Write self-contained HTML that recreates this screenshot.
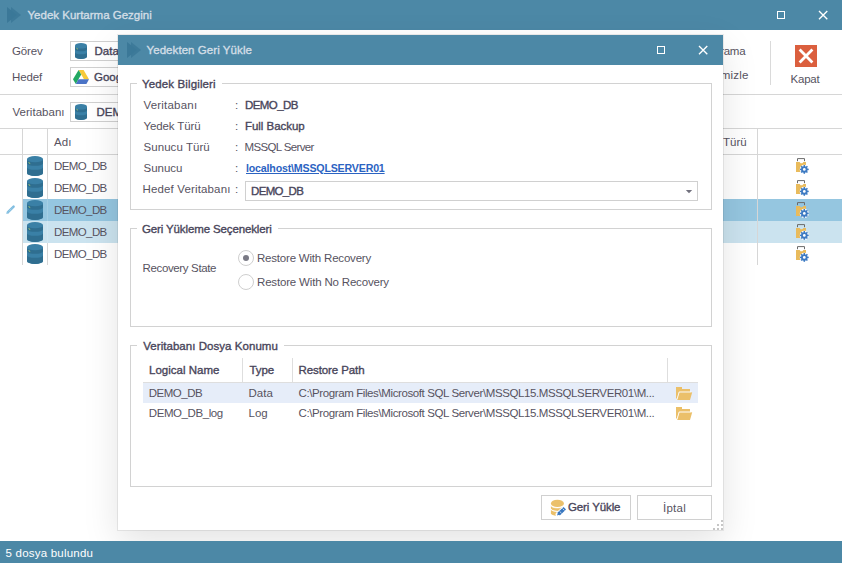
<!DOCTYPE html>
<html><head><meta charset="utf-8">
<style>
*{margin:0;padding:0;box-sizing:border-box}
html,body{width:842px;height:563px;overflow:hidden;background:#fff}
body{position:relative;font-family:"Liberation Sans",sans-serif;font-size:11.5px}
.a{position:absolute}
.t{position:absolute;white-space:nowrap;line-height:14px;height:14px}
.ln{position:absolute;background:#d6d6d6}
.tb{position:absolute;background:#4c88a6}
svg{position:absolute;overflow:visible}
</style></head><body>
<div class="tb" style="left:0;top:0;width:842px;height:30px"></div>
<svg style="left:0;top:0" width="30" height="30"><path d="M7 7L17 15L7 23Z" fill="#3b7898"/><path d="M11 7L21 15L11 23Z" fill="#3b7898" opacity="0.85"/></svg>
<div class="t" style="left:27.5px;top:8px;font-size:11.5px;letter-spacing:0.0px;color:#d3dee6;-webkit-text-stroke:0.35px #d3dee6">Yedek Kurtarma Gezgini</div>
<div class="a" style="left:777px;top:11px;width:8px;height:8px;border:1.2px solid #fff"></div>
<svg style="left:0;top:0" width="842" height="30"><path d="M819 11L827.3 19.3M827.3 11L819 19.3" stroke="#fff" stroke-width="1.35"/></svg>
<div class="t" style="left:12.0px;top:44px;font-size:11.5px;letter-spacing:-0.15px;color:#57535f">Görev</div>
<div class="a" style="left:70px;top:41px;width:240px;height:20px;border:1px solid #d0d0d0"></div>
<svg class="ic" style="left:75px;top:43px" width="12" height="16" viewBox="0 0 16 20" preserveAspectRatio="none"><path d="M0 3A8 3 0 0 1 16 3V17A8 3 0 0 1 0 17Z" fill="#3a80a6"/><path d="M0 4.6A8 2.2 0 0 0 16 4.6V8A8 2.2 0 0 1 0 8Z" fill="#2f6e90"/><path d="M0 12A8 2.2 0 0 0 16 12V17A8 3 0 0 1 0 17Z" fill="#2f6e90"/><path d="M2 6.6l1.8 1" stroke="#a9d06a" stroke-width="1.2"/></svg>
<div class="t" style="left:94.5px;top:44px;font-size:11.5px;letter-spacing:0px;color:#48455a;-webkit-text-stroke:0.35px #48455a">Database</div>
<div class="t" style="left:12.0px;top:70px;font-size:11.5px;letter-spacing:-0.15px;color:#57535f">Hedef</div>
<div class="a" style="left:70px;top:67px;width:240px;height:20px;border:1px solid #d0d0d0"></div>
<svg class="ic" style="left:73px;top:70px" width="16" height="14" viewBox="0 0 16 14"><path d="M5.6 0H10.6L16 9.3H11Z" fill="#f7c93a"/><path d="M5.6 0L8.2 4.5L2.8 14L0 9.2Z" fill="#22a861"/><path d="M2.8 14H13.4L16 9.3H5.5Z" fill="#4a73c6"/></svg>
<div class="t" style="left:94.0px;top:70px;font-size:11.5px;letter-spacing:0px;color:#48455a;-webkit-text-stroke:0.35px #48455a">Google Drive</div>
<div class="t" style="left:708.5px;top:44px;font-size:11.5px;letter-spacing:-0.25px;color:#57535f">Tarama</div>
<div class="t" style="left:708.0px;top:68px;font-size:11.5px;letter-spacing:0.25px;color:#57535f">Temizle</div>
<div class="ln" style="left:770px;top:41px;width:1px;height:44px;background:#dadada"></div>
<div class="a" style="left:795px;top:45px;width:22px;height:22px;background:#db5f3e"></div>
<svg style="left:0;top:0" width="842" height="100"><path d="M799.6 49.6L812.4 62.4M812.4 49.6L799.6 62.4" stroke="#fff" stroke-width="2.8"/></svg>
<div class="t" style="left:790.5px;top:72px;font-size:11.5px;letter-spacing:-0.2px;color:#57535f">Kapat</div>
<div class="ln" style="left:0;top:94px;width:842px;height:1px"></div>
<div class="t" style="left:12.5px;top:105px;font-size:11.5px;letter-spacing:0.023px;color:#57535f">Veritabanı</div>
<div class="a" style="left:70px;top:102px;width:240px;height:20px;border:1px solid #d0d0d0"></div>
<svg class="ic" style="left:75px;top:104px" width="12" height="16" viewBox="0 0 16 20" preserveAspectRatio="none"><path d="M0 3A8 3 0 0 1 16 3V17A8 3 0 0 1 0 17Z" fill="#3a80a6"/><path d="M0 4.6A8 2.2 0 0 0 16 4.6V8A8 2.2 0 0 1 0 8Z" fill="#2f6e90"/><path d="M0 12A8 2.2 0 0 0 16 12V17A8 3 0 0 1 0 17Z" fill="#2f6e90"/><path d="M2 6.6l1.8 1" stroke="#a9d06a" stroke-width="1.2"/></svg>
<div class="t" style="left:96.5px;top:105px;font-size:11.5px;letter-spacing:0px;color:#48455a;-webkit-text-stroke:0.35px #48455a">DEMO_DB</div>
<div class="ln" style="left:0;top:128px;width:842px;height:1px"></div>
<div class="ln" style="left:0;top:154px;width:842px;height:1px"></div>
<div class="a" style="left:23px;top:199px;width:819px;height:22px;background:#95c6e0"></div>
<div class="a" style="left:23px;top:221px;width:819px;height:22px;background:#cbe3ef"></div>
<div class="ln" style="left:22px;top:129px;width:1px;height:136px"></div>
<div class="ln" style="left:47px;top:129px;width:1px;height:136px"></div>
<div class="ln" style="left:757px;top:129px;width:1px;height:136px"></div>
<div class="a" style="left:47px;top:199px;width:1px;height:22px;background:#a4cee4"></div>
<div class="a" style="left:47px;top:221px;width:1px;height:22px;background:#d2e7f2"></div>
<div class="t" style="left:54.0px;top:135px;font-size:11.5px;letter-spacing:0.1px;color:#57535f">Adı</div>
<div class="t" style="left:688.5px;top:135px;font-size:11.5px;letter-spacing:0px;color:#57535f">Yedek Türü</div>
<svg class="ic" style="left:27px;top:156px" width="16" height="20" viewBox="0 0 16 20"><path d="M0 3A8 3 0 0 1 16 3V17A8 3 0 0 1 0 17Z" fill="#3a80a6"/><path d="M0 4A8 2.2 0 0 0 16 4V7.6A8 2.2 0 0 1 0 7.6Z" fill="#2f6e90"/><path d="M0 11.6A8 2.2 0 0 0 16 11.6V17A8 3 0 0 1 0 17Z" fill="#2f6e90"/><path d="M1.6 6.6l1.6 0.9" stroke="#a9d06a" stroke-width="1"/></svg>
<div class="t" style="left:54.0px;top:159px;font-size:11.5px;letter-spacing:-0.6px;color:#57535f">DEMO_DB</div>
<svg class="ic" style="left:796px;top:158px" width="16" height="18" viewBox="0 0 16 18"><path d="M1.5 3.2V0.6H8.5V3.2" fill="none" stroke="#6a6a6a" stroke-width="1"/><path d="M0 4H3.6L4.6 5.2H6.4L7.4 4H10V14H0Z" fill="#e9bb5c"/><g transform="translate(8.3,11.4)"><circle r="4.6" fill="#fff"/><g fill="#3d7ac2"><rect x="-0.75" y="-4.4" width="1.5" height="8.8"/><rect x="-0.75" y="-4.4" width="1.5" height="8.8" transform="rotate(90)"/><rect x="-0.75" y="-4.4" width="1.5" height="8.8" transform="rotate(45)"/><rect x="-0.75" y="-4.4" width="1.5" height="8.8" transform="rotate(-45)"/></g><circle r="2.3" fill="none" stroke="#3d7ac2" stroke-width="1.9"/><circle r="1.35" fill="#fff"/></g></svg>
<svg class="ic" style="left:27px;top:178px" width="16" height="20" viewBox="0 0 16 20"><path d="M0 3A8 3 0 0 1 16 3V17A8 3 0 0 1 0 17Z" fill="#3a80a6"/><path d="M0 4A8 2.2 0 0 0 16 4V7.6A8 2.2 0 0 1 0 7.6Z" fill="#2f6e90"/><path d="M0 11.6A8 2.2 0 0 0 16 11.6V17A8 3 0 0 1 0 17Z" fill="#2f6e90"/><path d="M1.6 6.6l1.6 0.9" stroke="#a9d06a" stroke-width="1"/></svg>
<div class="t" style="left:54.0px;top:181px;font-size:11.5px;letter-spacing:-0.6px;color:#57535f">DEMO_DB</div>
<svg class="ic" style="left:796px;top:180px" width="16" height="18" viewBox="0 0 16 18"><path d="M1.5 3.2V0.6H8.5V3.2" fill="none" stroke="#6a6a6a" stroke-width="1"/><path d="M0 4H3.6L4.6 5.2H6.4L7.4 4H10V14H0Z" fill="#e9bb5c"/><g transform="translate(8.3,11.4)"><circle r="4.6" fill="#fff"/><g fill="#3d7ac2"><rect x="-0.75" y="-4.4" width="1.5" height="8.8"/><rect x="-0.75" y="-4.4" width="1.5" height="8.8" transform="rotate(90)"/><rect x="-0.75" y="-4.4" width="1.5" height="8.8" transform="rotate(45)"/><rect x="-0.75" y="-4.4" width="1.5" height="8.8" transform="rotate(-45)"/></g><circle r="2.3" fill="none" stroke="#3d7ac2" stroke-width="1.9"/><circle r="1.35" fill="#fff"/></g></svg>
<svg class="ic" style="left:27px;top:200px" width="16" height="20" viewBox="0 0 16 20"><path d="M0 3A8 3 0 0 1 16 3V17A8 3 0 0 1 0 17Z" fill="#3a80a6"/><path d="M0 4A8 2.2 0 0 0 16 4V7.6A8 2.2 0 0 1 0 7.6Z" fill="#2f6e90"/><path d="M0 11.6A8 2.2 0 0 0 16 11.6V17A8 3 0 0 1 0 17Z" fill="#2f6e90"/><path d="M1.6 6.6l1.6 0.9" stroke="#a9d06a" stroke-width="1"/></svg>
<div class="t" style="left:54.0px;top:203px;font-size:11.5px;letter-spacing:-0.6px;color:#57535f">DEMO_DB</div>
<svg class="ic" style="left:796px;top:202px" width="16" height="18" viewBox="0 0 16 18"><path d="M1.5 3.2V0.6H8.5V3.2" fill="none" stroke="#6a6a6a" stroke-width="1"/><path d="M0 4H3.6L4.6 5.2H6.4L7.4 4H10V14H0Z" fill="#e9bb5c"/><g transform="translate(8.3,11.4)"><circle r="4.6" fill="#fff"/><g fill="#3d7ac2"><rect x="-0.75" y="-4.4" width="1.5" height="8.8"/><rect x="-0.75" y="-4.4" width="1.5" height="8.8" transform="rotate(90)"/><rect x="-0.75" y="-4.4" width="1.5" height="8.8" transform="rotate(45)"/><rect x="-0.75" y="-4.4" width="1.5" height="8.8" transform="rotate(-45)"/></g><circle r="2.3" fill="none" stroke="#3d7ac2" stroke-width="1.9"/><circle r="1.35" fill="#fff"/></g></svg>
<svg class="ic" style="left:27px;top:222px" width="16" height="20" viewBox="0 0 16 20"><path d="M0 3A8 3 0 0 1 16 3V17A8 3 0 0 1 0 17Z" fill="#3a80a6"/><path d="M0 4A8 2.2 0 0 0 16 4V7.6A8 2.2 0 0 1 0 7.6Z" fill="#2f6e90"/><path d="M0 11.6A8 2.2 0 0 0 16 11.6V17A8 3 0 0 1 0 17Z" fill="#2f6e90"/><path d="M1.6 6.6l1.6 0.9" stroke="#a9d06a" stroke-width="1"/></svg>
<div class="t" style="left:54.0px;top:225px;font-size:11.5px;letter-spacing:-0.6px;color:#57535f">DEMO_DB</div>
<svg class="ic" style="left:796px;top:224px" width="16" height="18" viewBox="0 0 16 18"><path d="M1.5 3.2V0.6H8.5V3.2" fill="none" stroke="#6a6a6a" stroke-width="1"/><path d="M0 4H3.6L4.6 5.2H6.4L7.4 4H10V14H0Z" fill="#e9bb5c"/><g transform="translate(8.3,11.4)"><circle r="4.6" fill="#fff"/><g fill="#3d7ac2"><rect x="-0.75" y="-4.4" width="1.5" height="8.8"/><rect x="-0.75" y="-4.4" width="1.5" height="8.8" transform="rotate(90)"/><rect x="-0.75" y="-4.4" width="1.5" height="8.8" transform="rotate(45)"/><rect x="-0.75" y="-4.4" width="1.5" height="8.8" transform="rotate(-45)"/></g><circle r="2.3" fill="none" stroke="#3d7ac2" stroke-width="1.9"/><circle r="1.35" fill="#fff"/></g></svg>
<svg class="ic" style="left:27px;top:244px" width="16" height="20" viewBox="0 0 16 20"><path d="M0 3A8 3 0 0 1 16 3V17A8 3 0 0 1 0 17Z" fill="#3a80a6"/><path d="M0 4A8 2.2 0 0 0 16 4V7.6A8 2.2 0 0 1 0 7.6Z" fill="#2f6e90"/><path d="M0 11.6A8 2.2 0 0 0 16 11.6V17A8 3 0 0 1 0 17Z" fill="#2f6e90"/><path d="M1.6 6.6l1.6 0.9" stroke="#a9d06a" stroke-width="1"/></svg>
<div class="t" style="left:54.0px;top:247px;font-size:11.5px;letter-spacing:-0.6px;color:#57535f">DEMO_DB</div>
<svg class="ic" style="left:796px;top:246px" width="16" height="18" viewBox="0 0 16 18"><path d="M1.5 3.2V0.6H8.5V3.2" fill="none" stroke="#6a6a6a" stroke-width="1"/><path d="M0 4H3.6L4.6 5.2H6.4L7.4 4H10V14H0Z" fill="#e9bb5c"/><g transform="translate(8.3,11.4)"><circle r="4.6" fill="#fff"/><g fill="#3d7ac2"><rect x="-0.75" y="-4.4" width="1.5" height="8.8"/><rect x="-0.75" y="-4.4" width="1.5" height="8.8" transform="rotate(90)"/><rect x="-0.75" y="-4.4" width="1.5" height="8.8" transform="rotate(45)"/><rect x="-0.75" y="-4.4" width="1.5" height="8.8" transform="rotate(-45)"/></g><circle r="2.3" fill="none" stroke="#3d7ac2" stroke-width="1.9"/><circle r="1.35" fill="#fff"/></g></svg>
<svg style="left:0;top:0" width="30" height="230"><path d="M8 212.2L13.6 206.7" stroke="#7fbde0" stroke-width="2.5" stroke-linecap="round"/><path d="M6.2 214L7 211.2L9 213.2Z" fill="#8cc4e3"/><path d="M8.8 211.3L12.3 208" stroke="#d6ebf6" stroke-width="0.7" stroke-dasharray="1 1"/></svg>
<div class="a" style="left:118px;top:35px;width:605px;height:495px;background:#fff;box-shadow:0 12px 34px rgba(0,0,0,0.115),0 0 0 1px rgba(0,0,0,0.07)"></div>
<div class="tb" style="left:118px;top:35px;width:605px;height:30px"></div>
<svg style="left:0;top:0" width="842" height="70"><path d="M127 42L137 50L127 58Z" fill="#3b7898"/><path d="M131 42L141 50L131 58Z" fill="#3b7898" opacity="0.85"/></svg>
<div class="t" style="left:146.5px;top:43px;font-size:11.5px;letter-spacing:0.066px;color:#d3dee6;-webkit-text-stroke:0.35px #d3dee6">Yedekten Geri Yükle</div>
<div class="a" style="left:657px;top:46px;width:8px;height:8px;border:1.2px solid #fff"></div>
<svg style="left:0;top:0" width="842" height="70"><path d="M699 46L707.3 54.3M707.3 46L699 54.3" stroke="#fff" stroke-width="1.35"/></svg>
<div class="a" style="left:130px;top:83px;width:582px;height:127px;border:1px solid #d2d2d2"></div>
<div class="a" style="left:137px;top:80px;width:85px;height:8px;background:#fff"></div>
<div class="t" style="left:142.0px;top:77px;font-size:11.5px;letter-spacing:0.128px;color:#48455a;-webkit-text-stroke:0.35px #48455a">Yedek Bilgileri</div>
<div class="t" style="left:143.5px;top:98px;font-size:11.5px;letter-spacing:0.199px;color:#57535f">Veritabanı</div>
<div class="t" style="left:143.5px;top:119px;font-size:11.5px;letter-spacing:-0.111px;color:#57535f">Yedek Türü</div>
<div class="t" style="left:143.5px;top:140px;font-size:11.5px;letter-spacing:0.06px;color:#57535f">Sunucu Türü</div>
<div class="t" style="left:143.5px;top:161px;font-size:11.5px;letter-spacing:0px;color:#57535f">Sunucu</div>
<div class="t" style="left:142.5px;top:182px;font-size:11.5px;letter-spacing:0.147px;color:#57535f">Hedef Veritabanı</div>
<div class="t" style="left:235.0px;top:98px;font-size:11.5px;letter-spacing:0px;color:#57535f">:</div>
<div class="t" style="left:235.0px;top:119px;font-size:11.5px;letter-spacing:0px;color:#57535f">:</div>
<div class="t" style="left:235.0px;top:140px;font-size:11.5px;letter-spacing:0px;color:#57535f">:</div>
<div class="t" style="left:235.0px;top:161px;font-size:11.5px;letter-spacing:0px;color:#57535f">:</div>
<div class="t" style="left:235.0px;top:182px;font-size:11.5px;letter-spacing:0px;color:#57535f">:</div>
<div class="t" style="left:245.0px;top:98px;font-size:11.5px;letter-spacing:-0.567px;color:#48455a;-webkit-text-stroke:0.35px #48455a">DEMO_DB</div>
<div class="t" style="left:245.0px;top:119px;font-size:11.5px;letter-spacing:-0.04px;color:#48455a;-webkit-text-stroke:0.35px #48455a">Full Backup</div>
<div class="t" style="left:244.5px;top:140px;font-size:11.5px;letter-spacing:-0.636px;color:#57535f">MSSQL Server</div>
<div class="t" style="left:246px;top:161px;font-size:11.5px;font-weight:bold;letter-spacing:-0.2px;transform:scaleX(0.925);transform-origin:0 0;color:#2b63c2;text-decoration:underline">localhost\MSSQLSERVER01</div>
<div class="a" style="left:245px;top:181px;width:453px;height:20px;border:1px solid #d0d0d0"></div>
<div class="t" style="left:251.0px;top:184px;font-size:11.5px;letter-spacing:-0.667px;color:#48455a;-webkit-text-stroke:0.35px #48455a">DEMO_DB</div>
<svg style="left:0;top:0" width="842" height="300"><path d="M685.8 190.1H692.2L689 193.3Z" fill="#72717e"/></svg>
<div class="a" style="left:130px;top:228px;width:582px;height:99px;border:1px solid #d2d2d2"></div>
<div class="a" style="left:137px;top:225px;width:141px;height:8px;background:#fff"></div>
<div class="t" style="left:142.0px;top:222px;font-size:11.5px;letter-spacing:-0.13px;color:#48455a;-webkit-text-stroke:0.35px #48455a">Geri Yükleme Seçenekleri</div>
<div class="t" style="left:142.5px;top:261px;font-size:11.5px;letter-spacing:-0.354px;color:#57535f">Recovery State</div>
<div class="a" style="left:238px;top:250px;width:16px;height:16px;border:1px solid #cfcfcf;border-radius:50%"></div>
<div class="a" style="left:243px;top:255px;width:6px;height:6px;background:#7a7a85;border-radius:50%"></div>
<div class="a" style="left:238px;top:274px;width:16px;height:16px;border:1px solid #cfcfcf;border-radius:50%"></div>
<div class="t" style="left:257.0px;top:251px;font-size:11.5px;letter-spacing:-0.2px;color:#57535f">Restore With Recovery</div>
<div class="t" style="left:257.0px;top:275px;font-size:11.5px;letter-spacing:-0.174px;color:#57535f">Restore With No Recovery</div>
<div class="a" style="left:130px;top:345px;width:582px;height:142px;border:1px solid #d2d2d2"></div>
<div class="a" style="left:137px;top:342px;width:147px;height:8px;background:#fff"></div>
<div class="t" style="left:143.25px;top:339px;font-size:11.5px;letter-spacing:0.046px;color:#48455a;-webkit-text-stroke:0.35px #48455a">Veritabanı Dosya Konumu</div>
<div class="ln" style="left:242px;top:358px;width:1px;height:24px;background:#dedede"></div>
<div class="ln" style="left:292px;top:358px;width:1px;height:24px;background:#dedede"></div>
<div class="ln" style="left:667px;top:358px;width:1px;height:24px;background:#dedede"></div>
<div class="ln" style="left:143px;top:382px;width:555px;height:1px;background:#dedede"></div>
<div class="a" style="left:143px;top:383px;width:555px;height:20px;background:#e6edf9"></div>
<div class="t" style="left:149.0px;top:363px;font-size:11.5px;letter-spacing:0.017px;color:#48455a;-webkit-text-stroke:0.35px #48455a">Logical Name</div>
<div class="t" style="left:249.5px;top:363px;font-size:11.5px;letter-spacing:-0.067px;color:#48455a;-webkit-text-stroke:0.35px #48455a">Type</div>
<div class="t" style="left:298.5px;top:363px;font-size:11.5px;letter-spacing:-0.091px;color:#48455a;-webkit-text-stroke:0.35px #48455a">Restore Path</div>
<div class="t" style="left:148.75px;top:386px;font-size:11.5px;letter-spacing:-0.5px;color:#57535f">DEMO_DB</div>
<div class="t" style="left:248.5px;top:386px;font-size:11.5px;letter-spacing:0px;color:#57535f">Data</div>
<div class="t" style="left:298.5px;top:386px;font-size:11.5px;letter-spacing:-0.393px;color:#57535f">C:\Program Files\Microsoft SQL Server\MSSQL15.MSSQLSERVER01\M...</div>
<div class="t" style="left:148.75px;top:406px;font-size:11.5px;letter-spacing:-0.42px;color:#57535f">DEMO_DB_log</div>
<div class="t" style="left:248.5px;top:406px;font-size:11.5px;letter-spacing:0px;color:#57535f">Log</div>
<div class="t" style="left:298.5px;top:406px;font-size:11.5px;letter-spacing:-0.393px;color:#57535f">C:\Program Files\Microsoft SQL Server\MSSQL15.MSSQLSERVER01\M...</div>
<svg class="ic" style="left:676px;top:387px" width="17" height="14" viewBox="0 0 17 14"><path d="M0 0H6V2H14V5H3L1 11.5H0Z" fill="#ebc06a"/><path d="M3.2 5.2H16.2L14 13H1Z" fill="#ebc06a"/><path d="M1 12.6L3.2 4.9H15.4" fill="none" stroke="#fff" stroke-width="0.8"/></svg>
<svg class="ic" style="left:676px;top:407px" width="17" height="14" viewBox="0 0 17 14"><path d="M0 0H6V2H14V5H3L1 11.5H0Z" fill="#ebc06a"/><path d="M3.2 5.2H16.2L14 13H1Z" fill="#ebc06a"/><path d="M1 12.6L3.2 4.9H15.4" fill="none" stroke="#fff" stroke-width="0.8"/></svg>
<div class="a" style="left:541px;top:495px;width:90px;height:25px;border:1px solid #d0d0d0"></div>
<svg style="left:546px;top:496px" width="24" height="24" viewBox="0 0 24 24"><ellipse cx="11.4" cy="7.4" rx="6.5" ry="3.6" fill="#ebc06a"/><path d="M4.9 9.3A6.5 2.6 0 0 0 17.9 9.3V12.2A6.5 2.8 0 0 1 4.9 12.2Z" fill="#ebc06a"/><path d="M4.9 13A6.5 2.6 0 0 0 14 15.6V19.6A6.5 2.6 0 0 1 4.9 17.8Z" fill="#ebc06a"/><path d="M4.9 9.3A6.5 2.6 0 0 0 17.9 9.3M4.9 12.8A6.5 2.6 0 0 0 17.9 12.8" fill="none" stroke="#fff" stroke-width="0.7"/><path d="M12.3 18.4L18.6 12.4" stroke="#fff" stroke-width="5.4" stroke-linecap="round"/><path d="M12.6 18.1L18.8 12.3" stroke="#3a78c0" stroke-width="3.6"/><path d="M11 19.6L12 16.6L14 18.5Z" fill="#3a78c0"/><path d="M13.6 15.4L15.6 17.3M16.6 12.6L18.4 14.4" stroke="#fff" stroke-width="0.7"/></svg>
<div class="t" style="left:568.0px;top:500px;font-size:11.5px;letter-spacing:-0.111px;color:#48455a;-webkit-text-stroke:0.35px #48455a">Geri Yükle</div>
<div class="a" style="left:637px;top:495px;width:75px;height:25px;border:1px solid #d0d0d0"></div>
<div class="t" style="left:663.0px;top:501px;font-size:11.5px;letter-spacing:0.25px;color:#57535f">İptal</div>
<svg style="left:0;top:0" width="842" height="563"><g fill="#c6c6c6"><rect x="721" y="520" width="2" height="2"/><rect x="717" y="524" width="2" height="2"/><rect x="721" y="524" width="2" height="2"/><rect x="713" y="528" width="2" height="2"/><rect x="717" y="528" width="2" height="2"/><rect x="721" y="528" width="2" height="2"/></g></svg>
<div class="tb" style="left:0;top:541px;width:842px;height:22px"></div>
<div class="t" style="left:5.5px;top:546px;font-size:11.5px;letter-spacing:0.214px;color:#ffffff">5 dosya bulundu</div>
</body></html>
